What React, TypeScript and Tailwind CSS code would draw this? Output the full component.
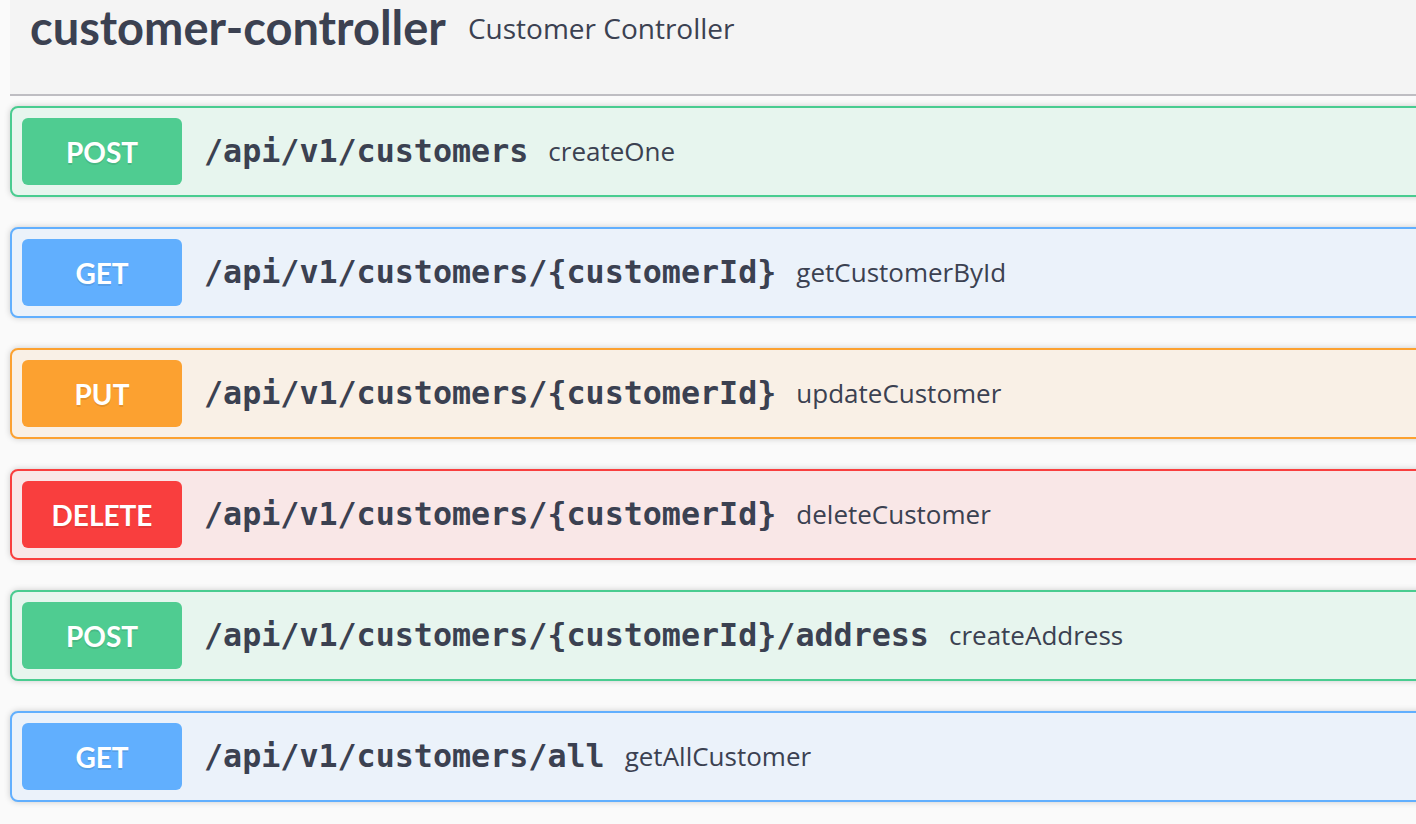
import React from 'react';

type Op = {
  method: string;
  path: string;
  summary: string;
};

const ops: Op[] = [
  { method: 'POST', path: '/api/v1/customers', summary: 'createOne' },
  { method: 'GET', path: '/api/v1/customers/{customerId}', summary: 'getCustomerById' },
  { method: 'PUT', path: '/api/v1/customers/{customerId}', summary: 'updateCustomer' },
  { method: 'DELETE', path: '/api/v1/customers/{customerId}', summary: 'deleteCustomer' },
  { method: 'POST', path: '/api/v1/customers/{customerId}/address', summary: 'createAddress' },
  { method: 'GET', path: '/api/v1/customers/all', summary: 'getAllCustomer' },
];

// block + badge colours per http method
const styles: Record<string, { block: string; badge: string }> = {
  POST: { block: 'border-[#49cc90] bg-[#e7f5ee]', badge: 'bg-[#4fcc91]' },
  GET: { block: 'border-[#61affe] bg-[#ebf2fa]', badge: 'bg-[#61affe]' },
  PUT: { block: 'border-[#fca130] bg-[#f9f0e6]', badge: 'bg-[#fca130]' },
  DELETE: { block: 'border-[#f93e3e] bg-[#f9e7e7]', badge: 'bg-[#f93e3e]' },
};

const OpBlock: React.FC<{ op: Op }> = ({ op }) => {
  const s = styles[op.method];
  return (
    <div
      className={`flex items-center h-[91px] -mr-4 rounded-lg border-2 shadow-[0_0_6px_rgba(0,0,0,0.19)] pl-[10px] ${s.block}`}
    >
      <span
        className={`flex items-center justify-center w-[160px] h-[67px] rounded-md text-white text-[28px] font-bold font-[Lato,'Open_Sans',sans-serif] [text-shadow:0_2px_0_rgba(0,0,0,0.1)] ${s.badge}`}
      >
        {op.method}
      </span>
      <span className="ml-[22px] text-[31.7px] font-bold text-[#3b4151] font-['DejaVu_Sans_Mono',monospace]">
        {op.path}
      </span>
      <span className="ml-[20px] text-[26px] text-[#3b4151] font-['Open_Sans',sans-serif]">
        {op.summary}
      </span>
    </div>
  );
};

export default function App() {
  return (
    <div className="w-[1416px] h-[824px] overflow-hidden bg-[#fafafa] pl-[10px]">
      {/* tag header */}
      <div className="flex items-start h-[96px] bg-[#f4f4f4] border-b-2 border-[#bebdc2] pl-[20px] pt-[3px]">
        <h4 className="text-[47px] font-bold leading-[48px] text-[#3b4151] font-[Lato,'Open_Sans',sans-serif]">
          customer-controller
        </h4>
        <span className="ml-[22px] mt-[4px] text-[28px] text-[#3b4151] font-['Open_Sans',sans-serif]">
          Customer Controller
        </span>
      </div>

      <div className="flex flex-col gap-[30px] pt-[10px]">
        {ops.map((op, i) => (
          <OpBlock key={i} op={op} />
        ))}
      </div>
    </div>
  );
}
